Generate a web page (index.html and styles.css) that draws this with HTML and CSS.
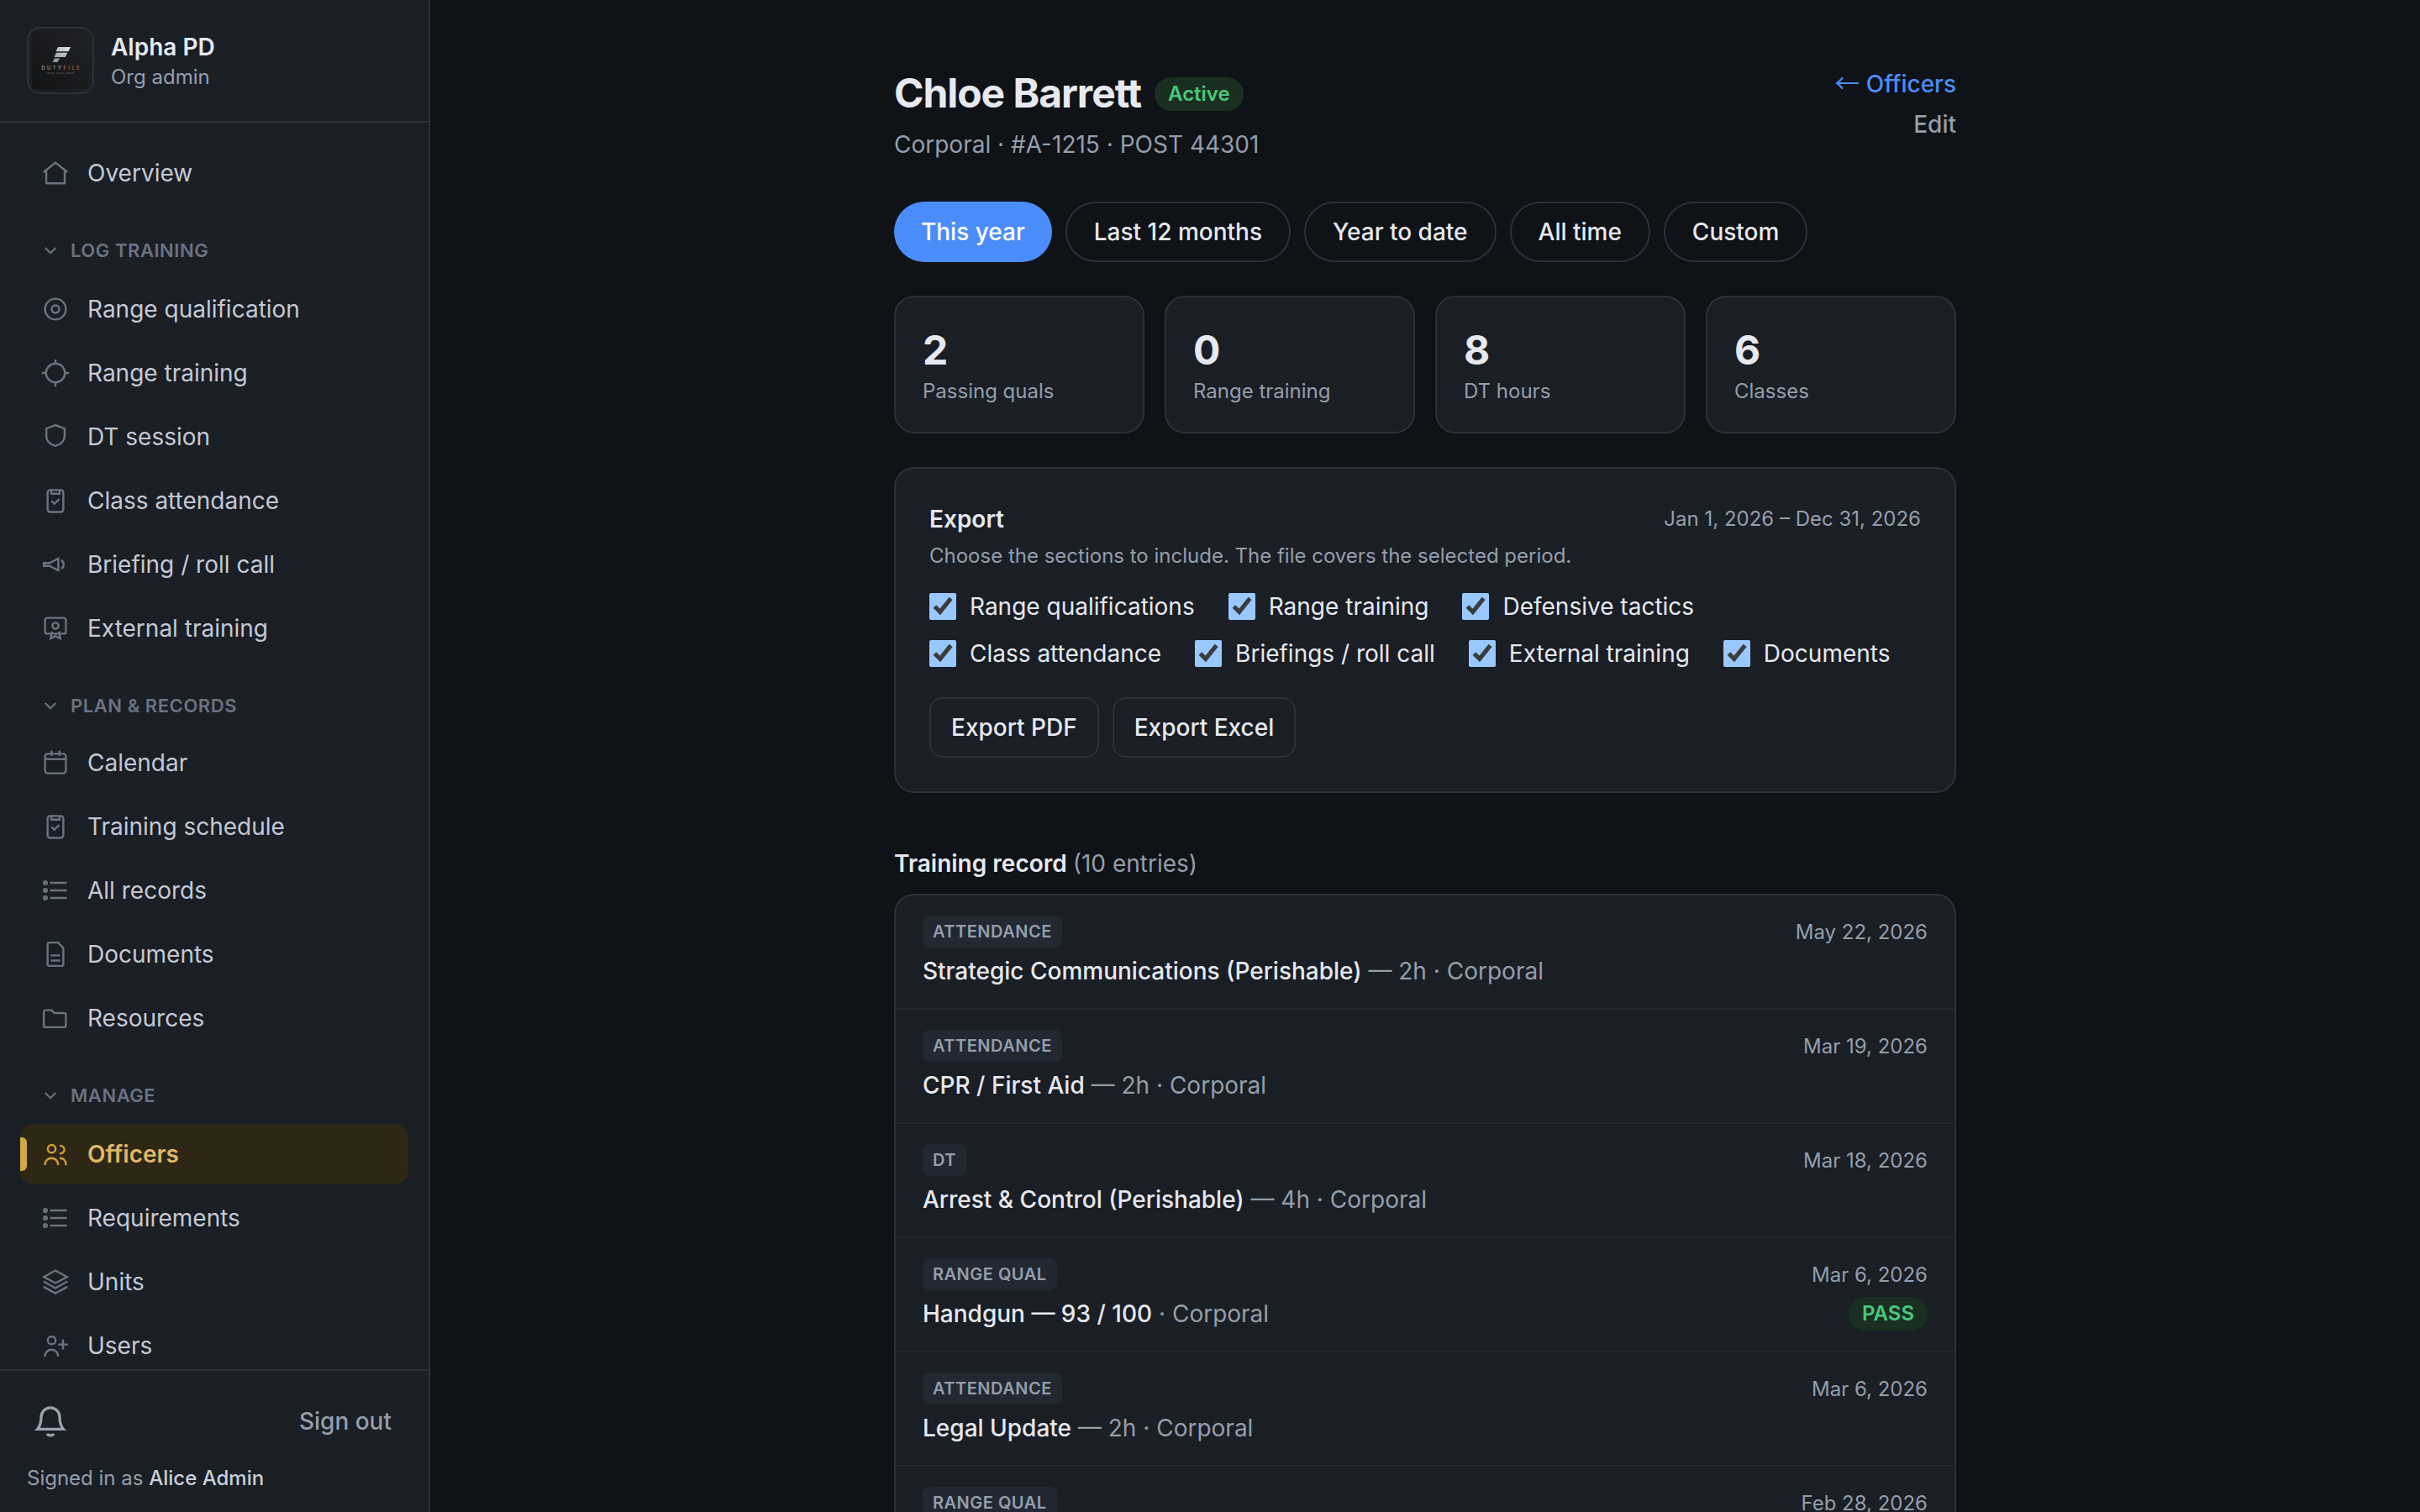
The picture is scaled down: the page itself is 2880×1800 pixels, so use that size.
FILE: index.html
```html
<!DOCTYPE html>
<html lang="en">
<head>
    <meta charset="utf-8">
    <title>Chloe Barrett - Officers</title>
    <link rel="stylesheet" href="styles.css">
</head>
<body>
    <!-- shared icons -->
    <svg class="sprite">
        <symbol id="i-chevron" viewBox="0 0 24 24"><path d="M5.75 9l6.25 6.25L18.25 9"/></symbol>
        <symbol id="i-clipboard" viewBox="0 0 24 24"><rect x="5.75" y="3.6" width="12.5" height="17.4" rx="2"/><path d="M8.75 3.75v2.75h6.5V3.75M8.9 12.2l2.1 2.3 4-3.8"/></symbol>
        <symbol id="i-list" viewBox="0 0 24 24"><path d="M7.75 6H21M7.75 12H21M7.75 18H21"/><circle cx="4" cy="6" r="1.2"/><circle cx="4" cy="12" r="1.2"/><circle cx="4" cy="18" r="1.2"/></symbol>
    </svg>

    <div class="app">
        <aside class="sidebar">
            <div class="brand">
                <svg class="brand-logo" viewBox="0 0 76 76">
                    <defs>
                        <linearGradient id="logoBg" x1="1" y1="0" x2="0" y2="1">
                            <stop offset="0" stop-color="#212226"/>
                            <stop offset="1" stop-color="#121314"/>
                        </linearGradient>
                        <linearGradient id="logoMark" x1="1" y1="0" x2="0" y2="1">
                            <stop offset="0" stop-color="#e8eaec"/>
                            <stop offset="1" stop-color="#84898f"/>
                        </linearGradient>
                    </defs>
                    <rect x="4" y="4" width="68" height="68" fill="url(#logoBg)"/>
                    <path fill="url(#logoMark)" d="M35 22h15l-2.5 5.2H32.3zM33 28.8h13.2l-2.5 5.2H30.3zM31 35.5h6l-2.5 4.5H28.5z"/>
                    <text class="logo-name" x="15.5" y="49" textLength="45">DUTY<tspan class="logo-accent">FILE</tspan></text>
                    <text class="logo-tag" x="21" y="53.5" textLength="34">TRAIN. TRACK. SERVE.</text>
                </svg>
                <div class="brand-text">
                    <div class="brand-name">Alpha PD</div>
                    <div class="brand-role">Org admin</div>
                </div>
            </div>

            <nav class="nav">
                <a class="nav-item"><svg viewBox="0 0 24 24"><path d="M2.5 11.3 12 3.7l9.5 7.6M4.7 9.8v10.4h14.6V9.8"/></svg>Overview</a>

                <div class="nav-group"><svg><use href="#i-chevron"/></svg>Log training</div>
                <a class="nav-item"><svg viewBox="0 0 24 24"><circle cx="12" cy="12" r="8.25"/><circle cx="12" cy="12" r="3"/></svg>Range qualification</a>
                <a class="nav-item"><svg viewBox="0 0 24 24"><circle cx="12" cy="12" r="7.5"/><path d="M12 1.25v3.25M12 19.5v3.25M1.25 12H4.5M19.5 12h3.25"/></svg>Range training</a>
                <a class="nav-item"><svg viewBox="0 0 24 24"><path d="M12 2.75 4.75 5.5v5.75C4.75 15 7.5 17.8 12 19.25c4.5-1.45 7.25-4.25 7.25-8V5.5z"/></svg>DT session</a>
                <a class="nav-item"><svg><use href="#i-clipboard"/></svg>Class attendance</a>
                <a class="nav-item"><svg viewBox="0 0 24 24"><path d="M2.75 10.8h4.5l7-3.5v9.4l-7-3.5h-4.5zM16.7 8.5c2.4 1.9 2.4 5.1 0 7"/></svg>Briefing / roll call</a>
                <a class="nav-item"><svg viewBox="0 0 24 24"><rect x="3.75" y="3.75" width="16.5" height="12.5" rx="1.8"/><circle cx="12" cy="10" r="2.4"/><path d="M9.2 14.5 8.2 20l3.8-1.9 3.8 1.9-1-5.5"/></svg>External training</a>

                <div class="nav-group"><svg><use href="#i-chevron"/></svg>Plan &amp; records</div>
                <a class="nav-item"><svg viewBox="0 0 24 24"><rect x="3.75" y="4.9" width="16.5" height="15.5" rx="2"/><path d="M3.75 9.2h16.5M8.9 2.25V6.5M15.1 2.25V6.5"/></svg>Calendar</a>
                <a class="nav-item"><svg><use href="#i-clipboard"/></svg>Training schedule</a>
                <a class="nav-item"><svg><use href="#i-list"/></svg>All records</a>
                <a class="nav-item"><svg viewBox="0 0 24 24"><path d="M7.25 2.75h6.9l4.1 4.25v12.75a1.5 1.5 0 0 1-1.5 1.5h-9.5a1.5 1.5 0 0 1-1.5-1.5V4.25a1.5 1.5 0 0 1 1.5-1.5zM8.3 12.9h7.4M8.3 17h7.4"/></svg>Documents</a>
                <a class="nav-item"><svg viewBox="0 0 24 24"><path d="M2.75 18.25V7.25a1.5 1.5 0 0 1 1.5-1.5H9L11.25 8h7.5a1.5 1.5 0 0 1 1.5 1.5v8.25a1.5 1.5 0 0 1-1.5 1.5h-15a1 1 0 0 1-1-1z"/></svg>Resources</a>

                <div class="nav-group"><svg><use href="#i-chevron"/></svg>Manage</div>
                <a class="nav-item active"><svg viewBox="0 0 24 24"><circle cx="9" cy="7.75" r="3.1"/><path d="M3.75 20.6v-.6a5.12 4.8 0 0 1 10.24 0v.6M15.3 5.25c5 0 5 6.3 0 6.3M15.4 15.2c3 0 4.85 2 4.85 4.8v.6"/></svg>Officers</a>
                <a class="nav-item"><svg><use href="#i-list"/></svg>Requirements</a>
                <a class="nav-item"><svg viewBox="0 0 24 24"><path d="M12 3 21.25 8.1 12 13 2.75 8.1zM2.5 11.7 12 17l9.5-5.3M2.5 15.9l9.5 5.2 9.5-5.2"/></svg>Units</a>
                <a class="nav-item"><svg viewBox="0 0 24 24"><circle cx="9" cy="7.75" r="3.1"/><path d="M3.75 20.6v-.6a5.12 4.8 0 0 1 10.24 0v.6M18 7.2V15M14.1 11.1h7.8"/></svg>Users</a>
            </nav>

            <div class="sidebar-foot">
                <div class="foot-row">
                    <svg class="bell" viewBox="0 0 24 24"><path d="M12 3.2a6 6 0 0 0-6 6c0 3.7-.9 6.2-2.4 7.9h16.8c-1.5-1.7-2.4-4.2-2.4-7.9a6 6 0 0 0-6-6zM10 20.1c.5 1.5 3.5 1.5 4 0"/></svg>
                    <button class="sign-out">Sign out</button>
                </div>
                <div class="signed-in">Signed in as <strong>Alice Admin</strong></div>
            </div>
        </aside>

        <main class="main">
            <div class="page">
                <header class="page-head">
                    <div>
                        <div class="title-row">
                            <h1>Chloe Barrett</h1>
                            <span class="badge">Active</span>
                        </div>
                        <p class="subtitle">Corporal · #A-1215 · POST 44301</p>
                    </div>
                    <div class="head-links">
                        <a class="back-link"><span class="arrow">←</span> Officers</a>
                        <a class="edit-link">Edit</a>
                    </div>
                </header>

                <div class="pills">
                    <button class="pill selected">This year</button>
                    <button class="pill">Last 12 months</button>
                    <button class="pill">Year to date</button>
                    <button class="pill">All time</button>
                    <button class="pill">Custom</button>
                </div>

                <div class="stats">
                    <div class="card stat"><div class="stat-value">2</div><div class="stat-label">Passing quals</div></div>
                    <div class="card stat"><div class="stat-value">0</div><div class="stat-label">Range training</div></div>
                    <div class="card stat"><div class="stat-value">8</div><div class="stat-label">DT hours</div></div>
                    <div class="card stat"><div class="stat-value">6</div><div class="stat-label">Classes</div></div>
                </div>

                <section class="card export">
                    <div class="export-head">
                        <h2>Export</h2>
                        <span class="period">Jan 1, 2026 – Dec 31, 2026</span>
                    </div>
                    <p class="hint">Choose the sections to include. The file covers the selected period.</p>
                    <div class="checks">
                        <label><input type="checkbox" checked>Range qualifications</label>
                        <label><input type="checkbox" checked>Range training</label>
                        <label><input type="checkbox" checked>Defensive tactics</label>
                        <label><input type="checkbox" checked>Class attendance</label>
                        <label><input type="checkbox" checked>Briefings / roll call</label>
                        <label><input type="checkbox" checked>External training</label>
                        <label><input type="checkbox" checked>Documents</label>
                    </div>
                    <div class="export-actions">
                        <button class="btn">Export PDF</button>
                        <button class="btn">Export Excel</button>
                    </div>
                </section>

                <h2 class="record-title">Training record <span>(10 entries)</span></h2>
                <div class="card records">
                    <div class="record">
                        <div>
                            <span class="tag">Attendance</span>
                            <div class="record-text"><b>Strategic Communications (Perishable)</b> — 2h · Corporal</div>
                        </div>
                        <div class="record-side"><span class="date">May 22, 2026</span></div>
                    </div>
                    <div class="record">
                        <div>
                            <span class="tag">Attendance</span>
                            <div class="record-text"><b>CPR / First Aid</b> — 2h · Corporal</div>
                        </div>
                        <div class="record-side"><span class="date">Mar 19, 2026</span></div>
                    </div>
                    <div class="record">
                        <div>
                            <span class="tag">DT</span>
                            <div class="record-text"><b>Arrest &amp; Control (Perishable)</b> — 4h · Corporal</div>
                        </div>
                        <div class="record-side"><span class="date">Mar 18, 2026</span></div>
                    </div>
                    <div class="record">
                        <div>
                            <span class="tag">Range qual</span>
                            <div class="record-text"><b>Handgun — 93 / 100</b> · Corporal</div>
                        </div>
                        <div class="record-side"><span class="date">Mar 6, 2026</span><span class="badge">PASS</span></div>
                    </div>
                    <div class="record">
                        <div>
                            <span class="tag">Attendance</span>
                            <div class="record-text"><b>Legal Update</b> — 2h · Corporal</div>
                        </div>
                        <div class="record-side"><span class="date">Mar 6, 2026</span></div>
                    </div>
                    <div class="record">
                        <div>
                            <span class="tag">Range qual</span>
                        </div>
                        <div class="record-side"><span class="date">Feb 28, 2026</span></div>
                    </div>
                </div>
            </div>
        </main>
    </div>
</body>
</html>
```
FILE: styles.css
```css
:root {
    color-scheme: dark;
    --bg: #0f1216;
    --surface: #1a1e25;
    --raised: #222831;
    --line: #2b303a;
    --text: #e6e9ef;
    --muted: #949eab;
    --blue: #4b8df8;
}

* {
    box-sizing: border-box;
}

body {
    margin: 0;
    background: var(--bg);
    color: var(--text);
    font-family: Inter, "Liberation Sans", sans-serif;
    font-size: 28px;
    line-height: 1.5;
}

h1, h2, p {
    margin: 0;
}

button {
    font: inherit;
    color: inherit;
    background: none;
    border: none;
    padding: 0;
}

svg {
    fill: none;
    stroke: currentColor;
    stroke-width: 1.6;
    flex-shrink: 0;
}

.sprite {
    display: none;
}

.app {
    display: flex;
    height: 1800px;
    overflow: hidden;
}

/* sidebar */
.sidebar {
    width: 512px;
    flex-shrink: 0;
    display: flex;
    flex-direction: column;
    background: var(--surface);
    border-right: 2px solid var(--line);
}

.brand {
    display: flex;
    align-items: center;
    gap: 20px;
    height: 146px;
    padding: 0 32px;
    border-bottom: 2px solid var(--line);
}

.brand-logo {
    width: 80px;
    height: 80px;
    border: 2px solid var(--line);
    border-radius: 16px;
    stroke: none;
}

.logo-name {
    font-size: 5.5px;
    font-weight: 600;
    fill: #8b9098;
}

.logo-accent {
    fill: #a9683a;
}

.logo-tag {
    font-size: 2.6px;
    fill: #6d7076;
}

.brand-text {
    padding-top: 4px;
}

.brand-name {
    font-weight: 600;
    line-height: 36px;
}

.brand-role {
    font-size: 24px;
    line-height: 36px;
    color: var(--muted);
}

.nav {
    flex: 1;
    min-height: 0;
    overflow: hidden;
    padding: 24px;
}

.nav-item {
    display: flex;
    align-items: center;
    gap: 20px;
    height: 72px;
    margin-bottom: 4px;
    padding: 0 24px;
    border-radius: 16px;
    color: #c4c9d4;
}

.nav-item svg {
    width: 36px;
    height: 36px;
    color: #6b7280;
}

.nav-item.active {
    position: relative;
    background: #2e2716;
    color: #deb768;
    font-weight: 600;
}

.nav-item.active svg {
    color: #cf9f35;
}

.nav-item.active::before {
    content: "";
    position: absolute;
    left: 0;
    top: 16px;
    width: 8px;
    height: 40px;
    border-radius: 0 6px 6px 0;
    background: #d4a942;
}

.nav-group {
    display: flex;
    align-items: center;
    gap: 12px;
    margin-top: 39px;
    padding: 0 24px 17px;
    font-size: 22px;
    font-weight: 600;
    line-height: 34px;
    letter-spacing: 0.025em;
    text-transform: uppercase;
    color: #6b7280;
}

.nav-group:nth-of-type(2) {
    padding-bottom: 15px;
}

.nav-group svg {
    width: 24px;
    height: 24px;
    stroke-width: 2;
}

.sidebar-foot {
    height: 170px;
    border-top: 2px solid var(--line);
    padding: 27px 32px 0;
    color: var(--muted);
}

.foot-row {
    display: flex;
    align-items: center;
    justify-content: space-between;
    height: 66px;
    padding: 0 12px 0 6px;
}

.bell {
    width: 44px;
    height: 44px;
    stroke-width: 1.8;
    color: #9aa3b0;
}

.sign-out {
    font-weight: 500;
}

.signed-in {
    margin-top: 17px;
    font-size: 24px;
}

.signed-in strong {
    font-weight: 500;
    color: #c9cfd9;
}

/* page */
.main {
    flex: 1;
}

.page {
    width: 1264px;
    margin: 0 auto;
    padding-top: 80px;
}

.card {
    background: var(--surface);
    border: 2px solid var(--line);
    border-radius: 24px;
}

.page-head {
    display: flex;
    justify-content: space-between;
    height: 160px;
}

.title-row {
    display: flex;
    align-items: center;
    gap: 16px;
    height: 64px;
}

h1 {
    margin-bottom: 2px;
    font-size: 48px;
    font-weight: 700;
    letter-spacing: -0.022em;
}

.badge {
    height: 40px;
    padding: 0 16px;
    border-radius: 20px;
    background: #1a2f22;
    color: #4ac77b;
    font-size: 24px;
    font-weight: 600;
    line-height: 40px;
}

.subtitle {
    margin-top: 7px;
    color: var(--muted);
}

.head-links {
    display: flex;
    flex-direction: column;
    align-items: flex-end;
    margin-top: -4px;
    font-weight: 500;
    line-height: 48px;
}

.back-link {
    height: 48px;
    color: var(--blue);
}

.arrow {
    font-family: "Noto Sans CJK JP", sans-serif;
    font-size: 30px;
    font-weight: 400;
    line-height: 0;
}

.edit-link {
    color: var(--muted);
}

.pills {
    display: flex;
    gap: 16px;
}

.pill {
    height: 72px;
    padding: 0 32px;
    border: 2px solid var(--line);
    border-radius: 36px;
    font-weight: 500;
}

.pill.selected {
    background: var(--blue);
    border: none;
    color: #fff;
}

.stats {
    display: grid;
    grid-template-columns: repeat(4, 1fr);
    gap: 24px;
    margin: 40px 0;
}

.stat {
    height: 164px;
    padding: 33px 32px 0;
}

.stat-value {
    font-size: 48px;
    font-weight: 700;
    line-height: 60px;
}

.stat-label {
    margin-top: 1px;
    font-size: 24px;
    color: var(--muted);
}

.export {
    height: 388px;
    padding: 40px;
}

.export-head {
    display: flex;
    align-items: center;
    justify-content: space-between;
    height: 40px;
}

h2 {
    font-size: 28px;
    font-weight: 600;
}

.period {
    font-size: 24px;
    color: var(--muted);
}

.hint {
    margin-top: 4px;
    font-size: 24px;
    line-height: 40px;
    color: var(--muted);
}

.checks {
    display: flex;
    flex-wrap: wrap;
    gap: 12px 40px;
    margin-top: 18px;
}

.checks label {
    display: flex;
    align-items: center;
    gap: 16px;
    height: 44px;
}

.checks input {
    width: 32px;
    height: 32px;
    margin: 0;
}

.export-actions {
    display: flex;
    gap: 16px;
    margin-top: 30px;
}

.btn {
    height: 72px;
    padding: 0 24px;
    border: 2px solid var(--line);
    border-radius: 16px;
    font-weight: 500;
}

.record-title {
    margin: 63px 0 15px;
}

.record-title span {
    font-weight: 400;
    color: var(--muted);
}

.record {
    display: flex;
    justify-content: space-between;
    height: 136px;
    padding: 24px 32px;
    border-bottom: 2px solid #222731;
}

.tag {
    display: block;
    width: fit-content;
    height: 38px;
    padding: 0 12px;
    border-radius: 8px;
    background: var(--raised);
    color: var(--muted);
    font-size: 20px;
    font-weight: 600;
    line-height: 38px;
    letter-spacing: 0.025em;
    text-transform: uppercase;
}

.record-text {
    margin-top: 7px;
    color: var(--muted);
}

.record-text b {
    font-weight: 500;
    color: var(--text);
}

.record-side {
    display: flex;
    flex-direction: column;
    align-items: flex-end;
    gap: 6px;
    color: var(--muted);
}

.date {
    font-size: 24px;
    line-height: 40px;
}
```
